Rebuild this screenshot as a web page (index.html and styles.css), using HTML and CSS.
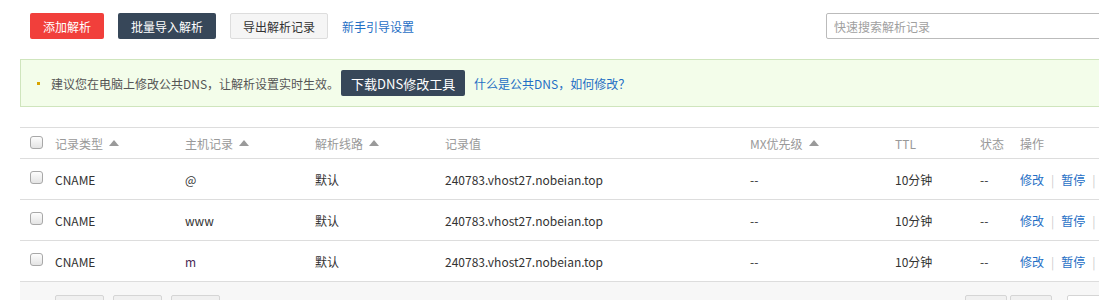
FILE: index.html
```html
<!DOCTYPE html>
<html lang="zh-CN">

<head>
    <meta charset="UTF-8">
    <title>解析设置</title>
    <link rel="stylesheet" href="styles.css">
</head>

<body>
    <div class="page">
        <!-- 顶部工具栏 -->
        <div class="toolbar">
            <a href="javascript:;" class="btn btn-red">添加解析</a>
            <a href="javascript:;" class="btn btn-dark btn-wide">批量导入解析</a>
            <a href="javascript:;" class="btn btn-light btn-wide">导出解析记录</a>
            <a href="javascript:;" class="link">新手引导设置</a>
            <input class="search" type="text" placeholder="快速搜索解析记录">
        </div>

        <!-- 提示 -->
        <div class="tip">
            <span class="dot"></span>
            <span class="tip-text">建议您在电脑上修改公共DNS，让解析设置实时生效。</span>
            <a href="javascript:;" class="btn btn-dark btn-tool">下载DNS修改工具</a>
            <a href="javascript:;" class="link">什么是公共DNS，如何修改？</a>
        </div>

        <!-- 记录列表 -->
        <div class="table">
            <div class="row head">
                <div class="cell"><span class="check"></span></div>
                <div class="cell">记录类型<span class="sort"></span></div>
                <div class="cell">主机记录<span class="sort"></span></div>
                <div class="cell">解析线路<span class="sort"></span></div>
                <div class="cell">记录值</div>
                <div class="cell">MX优先级<span class="sort"></span></div>
                <div class="cell">TTL</div>
                <div class="cell">状态</div>
                <div class="cell">操作</div>
            </div>
            <div class="row">
                <div class="cell"><span class="check"></span></div>
                <div class="cell">CNAME</div>
                <div class="cell">@</div>
                <div class="cell">默认</div>
                <div class="cell">240783.vhost27.nobeian.top</div>
                <div class="cell">--</div>
                <div class="cell">10分钟</div>
                <div class="cell">--</div>
                <div class="cell ops"><a href="javascript:;">修改</a><i>|</i><a href="javascript:;">暂停</a><i>|</i><a href="javascript:;" class="del">删除</a></div>
            </div>
            <div class="row">
                <div class="cell"><span class="check"></span></div>
                <div class="cell">CNAME</div>
                <div class="cell">www</div>
                <div class="cell">默认</div>
                <div class="cell">240783.vhost27.nobeian.top</div>
                <div class="cell">--</div>
                <div class="cell">10分钟</div>
                <div class="cell">--</div>
                <div class="cell ops"><a href="javascript:;">修改</a><i>|</i><a href="javascript:;">暂停</a><i>|</i><a href="javascript:;" class="del">删除</a></div>
            </div>
            <div class="row">
                <div class="cell"><span class="check"></span></div>
                <div class="cell">CNAME</div>
                <div class="cell host-m">m</div>
                <div class="cell">默认</div>
                <div class="cell">240783.vhost27.nobeian.top</div>
                <div class="cell">--</div>
                <div class="cell">10分钟</div>
                <div class="cell">--</div>
                <div class="cell ops"><a href="javascript:;">修改</a><i>|</i><a href="javascript:;">暂停</a><i>|</i><a href="javascript:;" class="del">删除</a></div>
            </div>
            <!-- 底部批量操作 -->
            <div class="foot">
                <div class="foot-left">
                    <a href="javascript:;" class="fbtn">暂停</a>
                    <a href="javascript:;" class="fbtn">启用</a>
                    <a href="javascript:;" class="fbtn">删除</a>
                </div>
                <div class="foot-right">
                    <a href="javascript:;" class="fbtn pbtn">上一页</a>
                    <a href="javascript:;" class="fbtn pbtn">下一页</a>
                    <a href="javascript:;" class="fbtn pinput"></a>
                </div>
            </div>
        </div>
    </div>
</body>

</html>
```

FILE: styles.css
```css
* {
    padding: 0;
    margin: 0;
    box-sizing: border-box;
}

a {
    text-decoration: none;
}

html,
body {
    overflow: hidden;
}

body {
    background-color: #fff;
    font-family: "Noto Sans CJK SC", "Noto Sans", sans-serif;
    font-size: 12px;
    color: #333;
}

.page {
    width: 1220px;
    padding-left: 20px;
}

/* 顶部工具栏 */
.toolbar {
    display: flex;
    align-items: center;
    gap: 14px;
    padding: 13px 0 0 10px;
    height: 39px;
}

.btn {
    display: inline-flex;
    align-items: center;
    justify-content: center;
    width: 74px;
    height: 26px;
    border-radius: 2px;
    font-size: 12px;
    white-space: nowrap;
}

.btn-wide {
    width: 98px;
}

.btn-red {
    background-color: #f13f3b;
    color: #fff;
}

.btn-dark {
    background-color: #374759;
    color: #fff;
}

.btn-light {
    background-color: #f5f5f5;
    border: 1px solid #ddd;
    color: #333;
}

.link {
    color: #1f6fc5;
    white-space: nowrap;
}

.search {
    margin-left: 398px;
    width: 320px;
    height: 26px;
    border: 1px solid #bbb;
    border-radius: 2px;
    padding: 0 7px;
    font-family: inherit;
    font-size: 12px;
    outline: none;
}

.search::placeholder {
    color: #a0a0a0;
}

/* 提示 */
.tip {
    display: flex;
    align-items: center;
    margin-top: 20px;
    height: 48px;
    border: 1px solid #cfe5bd;
    background-color: #f3fdea;
    padding-left: 16px;
    color: #555;
}

.dot {
    width: 3px;
    height: 3px;
    background-color: #d9a400;
    margin-right: 11px;
}

.tip-text {
    margin-right: 2px;
    white-space: nowrap;
}

.btn-tool {
    width: 124px;
    font-size: 13px;
    margin-right: 9px;
}

/* 表格 */
.table {
    margin-top: 20px;
    border-top: 1px solid #ddd;
}

.row {
    display: grid;
    grid-template-columns: 35px 130px 130px 130px 305px 145px 85px 40px 1fr;
    align-items: center;
    height: 41px;
    border-bottom: 1px solid #ddd;
}

.row.head {
    height: 31px;
    color: #999;
}

.cell {
    display: flex;
    align-items: center;
    white-space: nowrap;
}

.cell:first-child {
    padding-left: 10px;
}

.check {
    display: inline-block;
    width: 13px;
    height: 13px;
    border: 1px solid #a8a8a8;
    border-radius: 3px;
    background: linear-gradient(#fdfdfd, #e4e4e4);
    margin-top: -4px;
}

.head .check {
    margin-top: -2px;
}

.sort {
    width: 0;
    height: 0;
    margin-left: 6px;
    border-left: 5px solid transparent;
    border-right: 5px solid transparent;
    border-bottom: 6px solid #9a9a9a;
}

.host-m {
    color: #4a2a55;
}

.ops a {
    color: #1f6fc5;
}

.ops i {
    font-style: normal;
    color: #ccc;
    margin: 0 7px;
}

.ops .del {
    color: #c0488a;
}

/* 底部 */
.foot {
    display: flex;
    justify-content: space-between;
    height: 40px;
    background-color: #f7f7f7;
    padding: 13px 0 0 35px;
}

.foot-left,
.foot-right {
    display: flex;
    gap: 9px;
}

.fbtn {
    display: block;
    width: 49px;
    height: 26px;
    border: 1px solid #d5d5d5;
    border-radius: 2px;
    background-color: #f0f0f0;
    color: #333;
    text-align: center;
    line-height: 24px;
}

.foot-right {
    gap: 3px;
    margin-right: 103px;
}

.pbtn {
    width: 42px;
}

.pinput {
    width: 50px;
    margin-left: 12px;
    background-color: #fff;
}
```
